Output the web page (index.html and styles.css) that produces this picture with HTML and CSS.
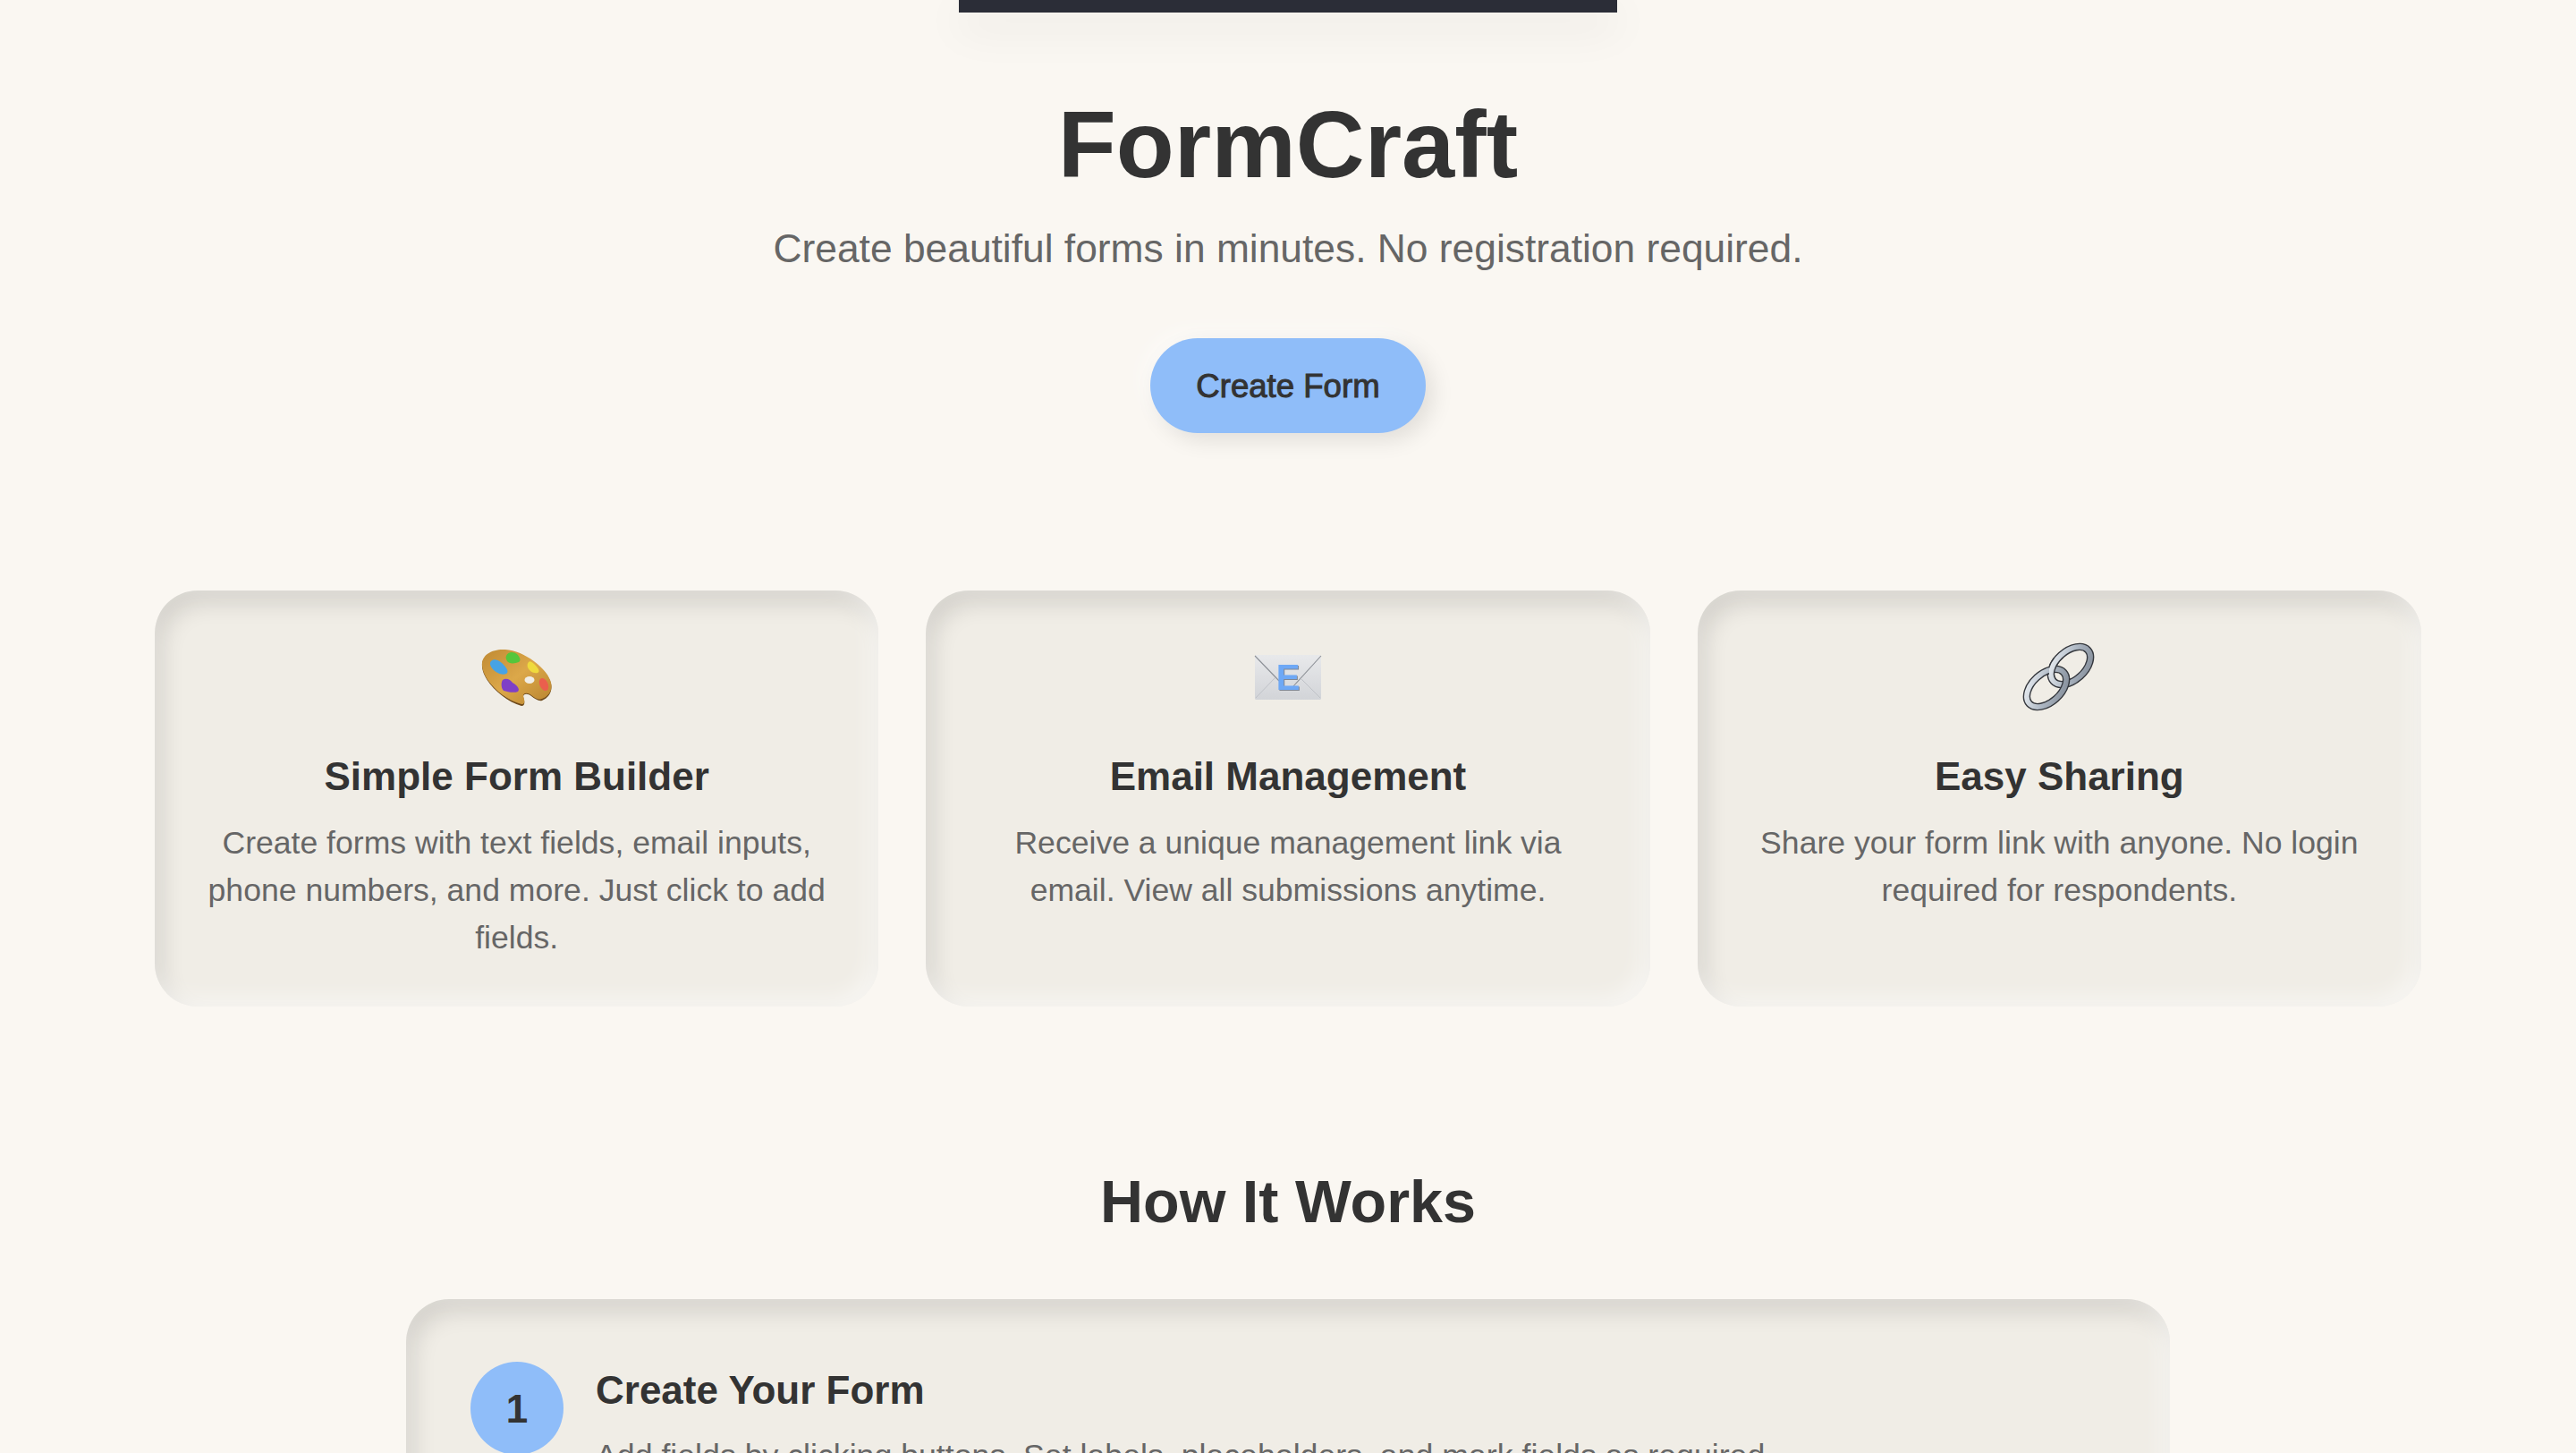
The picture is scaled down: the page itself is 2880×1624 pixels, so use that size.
FILE: index.html
```html
<!DOCTYPE html>
<html lang="en">
<head>
<meta charset="utf-8">
<title>FormCraft</title>
<link rel="stylesheet" href="styles.css">
</head>
<body>
<div class="topbar"></div>
<main class="page">
  <section class="hero">
    <h1 class="hero-title">FormCraft</h1>
    <p class="hero-sub">Create beautiful forms in minutes. No registration required.</p>
    <a class="cta">Create Form</a>
  </section>
  <section class="features">
    <article class="card">
      <div class="icon">
        <svg class="emoji emoji-palette" viewBox="0 0 84 66">
          <defs>
            <linearGradient id="wood" x1="0" y1="0" x2="1" y2="1"><stop offset="0" stop-color="#c08a34"/><stop offset=".5" stop-color="#dca849"/><stop offset="1" stop-color="#b8832f"/></linearGradient>
            <filter id="soft"><feGaussianBlur stdDeviation=".4"/></filter>
          </defs>
          <g filter="url(#soft)">
            <path d="M29 3C14 2 2 9 3 21C4 37 26 59 47 65C51 65 51 61 49 55C49 51 54 51 58 54C62 57 66 60 70 59C78 56 82 48 80 40C77 25 50 4 29 3Z" fill="#6e4a1b"/>
            <path d="M29 2C14 1 2 8 3 20C4 36 26 58 47 63C51 63 51 60 49 54C49 50 54 50 58 53C62 56 66 59 70 57C78 54 82 47 80 39C77 24 50 3 29 2Z" fill="url(#wood)"/>
            <ellipse cx="56" cy="36" rx="5.5" ry="4" fill="#f0ede6"/>
            <path d="M13 15C17 11 23 15 27 19C31 23 33 27 30 29C25 31 19 28 15 24C12 21 11 17 13 15Z" fill="#46a3e4"/>
            <path d="M30 9C32 4 38 4 42 7C45 10 47 14 44 16C39 18 33 18 31 15C30 13 29 11 30 9Z" fill="#55c63a"/>
            <path d="M55 16C57 14 60 17 63 20C66 23 68 27 65 28C60 29 56 26 54 22C53 19 54 17 55 16Z" fill="#efda3c"/>
            <path d="M26 36C30 33 35 36 37 39C41 41 46 46 43 49C38 51 31 49 27 48C24 45 24 39 26 36Z" fill="#7f3fc6"/>
            <ellipse cx="72" cy="41" rx="4.5" ry="7.5" transform="rotate(-25 72 41)" fill="#ea5f4e"/>
          </g>
        </svg>
      </div>
      <h3 class="card-title">Simple Form Builder</h3>
      <p class="card-text">Create forms with text fields, email inputs, phone numbers, and more. Just click to add fields.</p>
    </article>
    <article class="card">
      <div class="icon">
        <svg class="emoji emoji-mail" viewBox="0 0 76 52">
          <defs>
            <linearGradient id="env" x1="0" y1="0" x2="0" y2="1"><stop offset="0" stop-color="#e8e9eb"/><stop offset="1" stop-color="#d2d4d8"/></linearGradient>
            <filter id="softer"><feGaussianBlur stdDeviation=".35"/></filter>
          </defs>
          <g filter="url(#softer)">
            <rect x="1" y="1" width="74" height="50" rx="1.5" fill="url(#env)"/>
            <path d="M1 2L28 30M75 2L44 36" fill="none" stroke="#8d9197" stroke-width="1.1"/>
            <path d="M2 49L24 26M74 49L52 27" fill="none" stroke="#bfc2c7" stroke-width="1"/>
            <text class="mail-shadow" x="39" y="41" text-anchor="middle">E</text>
            <text class="mail-letter" x="38" y="40" text-anchor="middle">E</text>
          </g>
        </svg>
      </div>
      <h3 class="card-title">Email Management</h3>
      <p class="card-text">Receive a unique management link via email. View all submissions anytime.</p>
    </article>
    <article class="card">
      <div class="icon">
        <svg class="emoji emoji-chain" viewBox="0 0 82 80">
          <defs>
            <linearGradient id="steel" x1="0" y1="0" x2="1" y2="1"><stop offset="0" stop-color="#eef2f6"/><stop offset=".5" stop-color="#aeb8c4"/><stop offset="1" stop-color="#808995"/></linearGradient>
            <clipPath id="front"><rect x="30" y="18" width="24" height="24"/></clipPath>
            <filter id="softest"><feGaussianBlur stdDeviation=".4"/></filter>
          </defs>
          <g fill="none" filter="url(#softest)">
            <g transform="rotate(-42 54 27)">
              <ellipse cx="54" cy="27" rx="26" ry="16" stroke="#34373d" stroke-width="8.4"/>
              <ellipse cx="54" cy="27" rx="26" ry="16" stroke="url(#steel)" stroke-width="5.6"/>
            </g>
            <g transform="rotate(-42 27 52)">
              <ellipse cx="27" cy="52" rx="26" ry="16" stroke="#34373d" stroke-width="8.4"/>
              <ellipse cx="27" cy="52" rx="26" ry="16" stroke="url(#steel)" stroke-width="5.6"/>
            </g>
            <g clip-path="url(#front)">
              <g transform="rotate(-42 54 27)">
                <ellipse cx="54" cy="27" rx="26" ry="16" stroke="#34373d" stroke-width="8.4"/>
                <ellipse cx="54" cy="27" rx="26" ry="16" stroke="url(#steel)" stroke-width="5.6"/>
              </g>
            </g>
          </g>
        </svg>
      </div>
      <h3 class="card-title">Easy Sharing</h3>
      <p class="card-text">Share your form link with anyone. No login required for respondents.</p>
    </article>
  </section>
  <section class="how">
    <h2 class="how-title">How It Works</h2>
    <div class="step-card">
      <div class="step">
        <div class="step-num">1</div>
        <div class="step-body">
          <h4 class="step-title">Create Your Form</h4>
          <p class="step-text">Add fields by clicking buttons. Set labels, placeholders, and mark fields as required.</p>
        </div>
      </div>
    </div>
  </section>
</main>
</body>
</html>
```
FILE: styles.css
```css
* { box-sizing: border-box; }
html, body { margin: 0; padding: 0; }
body {
  height: 1624px;
  overflow: hidden;
  background: #faf7f2;
  color: #333;
  font-family: "Liberation Sans", Arial, sans-serif;
}
.topbar {
  width: 736px;
  height: 14px;
  margin: 0 auto;
  background: #2b2d37;
  box-shadow: 0 16px 48px rgba(0, 0, 0, 0.1);
}
.page {
  display: flex;
  flex-direction: column;
  align-items: center;
}
.hero {
  display: flex;
  flex-direction: column;
  align-items: center;
  padding-top: 85px;
}
.hero-title {
  margin: 0;
  font-size: 106.4px;
  line-height: 125px;
  font-weight: 700;
}
.hero-sub {
  margin: 21px 0 67px;
  font-size: 44.35px;
  line-height: 66px;
  color: #666;
}
.cta {
  display: flex;
  align-items: center;
  justify-content: center;
  width: 308px;
  height: 106px;
  padding-top: 2px;
  border-radius: 53px;
  background: #8fbdf9;
  font-size: 36.6px;
  -webkit-text-stroke: 1px #333;
  box-shadow: 8px 8px 24px rgba(0, 0, 0, 0.1), -8px -8px 24px rgba(255, 255, 255, 0.5);
}
.features {
  display: grid;
  grid-template-columns: repeat(3, 1fr);
  gap: 53px;
  width: 2534px;
  margin-top: 176px;
}
.card {
  padding: 52px 50px 50px;
  border-radius: 48px;
  background: #f0ede6;
  text-align: center;
  box-shadow: inset -8px -8px 24px rgba(255, 255, 255, 0.55), inset 8px 14px 26px rgba(0, 0, 0, 0.12);
}
.icon {
  display: flex;
  align-items: center;
  justify-content: center;
  height: 90px;
  margin-bottom: 39px;
}
.emoji { display: block; }
.emoji-palette { width: 84px; height: 66px; }
.emoji-mail { width: 76px; height: 52px; }
.emoji-chain { width: 82px; height: 80px; }
.mail-letter, .mail-shadow {
  font-family: "Liberation Sans", Arial, sans-serif;
  font-size: 40px;
  font-weight: 700;
}
.mail-letter { fill: #6ea8f5; }
.mail-shadow { fill: #7f8794; }
.card-title {
  margin: 0 0 21px;
  font-size: 44px;
  line-height: 54px;
  font-weight: 700;
}
.card-text {
  margin: 0;
  font-size: 35.6px;
  line-height: 53px;
  color: #666;
}
.how {
  display: flex;
  flex-direction: column;
  align-items: center;
  width: 1972px;
  margin-top: 178px;
}
.how-title {
  margin: 0 0 69px;
  font-size: 66.5px;
  line-height: 80px;
  font-weight: 700;
}
.step-card {
  width: 100%;
  padding: 70px 72px;
  border-radius: 48px;
  background: #f0ede6;
  box-shadow: inset -8px -8px 24px rgba(255, 255, 255, 0.55), inset 8px 14px 26px rgba(0, 0, 0, 0.12);
}
.step {
  display: flex;
  gap: 36px;
}
.step-num {
  display: flex;
  flex: none;
  align-items: center;
  justify-content: center;
  width: 104px;
  height: 104px;
  padding-top: 2px;
  border-radius: 50%;
  background: #8fbdf9;
  font-size: 44px;
  font-weight: 700;
}
.step-body { padding-top: 5px; }
.step-title {
  margin: 0 0 20px;
  font-size: 44px;
  line-height: 54px;
  font-weight: 700;
}
.step-text {
  margin: 0;
  font-size: 35.7px;
  line-height: 53px;
  color: #666;
}
```
